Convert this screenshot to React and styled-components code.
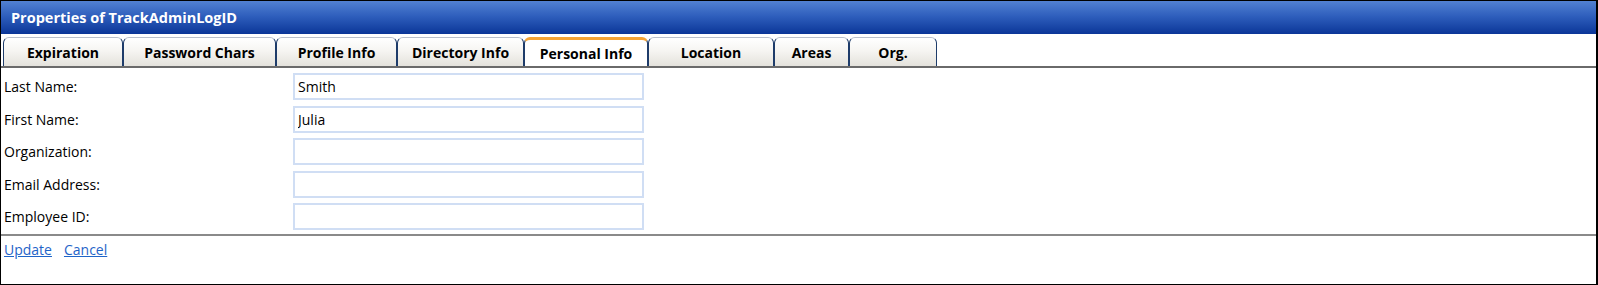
import React from "react";
import styled, { createGlobalStyle } from "styled-components";

const Global = createGlobalStyle`
  html, body {
    margin: 0;
    padding: 0;
    background: #fff;
  }
  * {
    box-sizing: border-box;
  }
`;

const Frame = styled.div`
  width: 1598px;
  height: 285px;
  border: 1px solid #000;
  border-right-width: 2px;
  background: #fff;
  font-family: "Open Sans", "Liberation Sans", sans-serif;
  display: flex;
  flex-direction: column;
`;

const TitleBar = styled.div`
  height: 33px;
  padding-left: 10px;
  display: flex;
  align-items: center;
  color: #fff;
  font-weight: bold;
  font-size: 14.5px;
  background: linear-gradient(to bottom, #5281d2 0%, #2f5fbd 45%, #0b3698 100%);
`;

const TabBar = styled.div`
  margin-top: 3px;
  padding-left: 2px;
  height: 31px;
  display: flex;
  align-items: flex-end;
  border-bottom: 2px solid #6a6a6a;
`;

const Tab = styled.div`
  width: ${(p) => p.w}px;
  height: 29px;
  display: flex;
  align-items: center;
  justify-content: center;
  padding-top: 1px;
  font-size: 14px;
  font-weight: bold;
  color: #000;
  border: 1px solid #1e3c6a;
  border-bottom: none;
  border-top-color: ${(p) => (p.active ? "#f5a435" : "#b9c0cc")};
  border-top-width: ${(p) => (p.active ? "3px" : "1px")};
  border-radius: 6px 6px 0 0;
  background: ${(p) =>
    p.active
      ? "#fff"
      : "linear-gradient(to bottom, #ffffff 0%, #f6f5f2 45%, #e4e2dc 100%)"};
`;

const Form = styled.div`
  padding: 5px 0 0 3px;
  display: grid;
  grid-template-columns: 289px 351px;
  row-gap: 5.5px;
  height: 166px;
  align-content: start;
`;

const Label = styled.div`
  height: 27px;
  display: flex;
  align-items: center;
  font-size: 14px;
  color: #000;
`;

const Input = styled.input`
  height: 27px;
  width: 351px;
  border: 2px solid #d0def4;
  padding: 0 0 0 3px;
  font-family: inherit;
  font-size: 14px;
  color: #000;
  outline: none;
  background: #fff;
`;

const Footer = styled.div`
  border-top: 2px solid #8a8a8a;
  padding: 4px 0 0 3px;
  display: flex;
  gap: 12px;
`;

const Link = styled.a`
  font-size: 14px;
  color: #1f64c8;
  text-decoration: underline;
  cursor: pointer;
`;

const tabs = [
  { label: "Expiration", w: 120 },
  { label: "Password Chars", w: 153 },
  { label: "Profile Info", w: 121 },
  { label: "Directory Info", w: 127 },
  { label: "Personal Info", w: 124, active: true },
  { label: "Location", w: 126 },
  { label: "Areas", w: 75 },
  { label: "Org.", w: 88 },
];

const fields = [
  { label: "Last Name:", value: "Smith" },
  { label: "First Name:", value: "Julia" },
  { label: "Organization:", value: "" },
  { label: "Email Address:", value: "" },
  { label: "Employee ID:", value: "" },
];

export default function App() {
  return (
    <>
      <Global />
      <Frame>
        <TitleBar>Properties of TrackAdminLogID</TitleBar>
        <TabBar>
          {tabs.map((t) => (
            <Tab key={t.label} w={t.w} active={t.active}>
              {t.label}
            </Tab>
          ))}
        </TabBar>
        <Form>
          {fields.map((f) => (
            <React.Fragment key={f.label}>
              <Label>{f.label}</Label>
              <Input defaultValue={f.value} />
            </React.Fragment>
          ))}
        </Form>
        <Footer>
          <Link>Update</Link>
          <Link>Cancel</Link>
        </Footer>
      </Frame>
    </>
  );
}
